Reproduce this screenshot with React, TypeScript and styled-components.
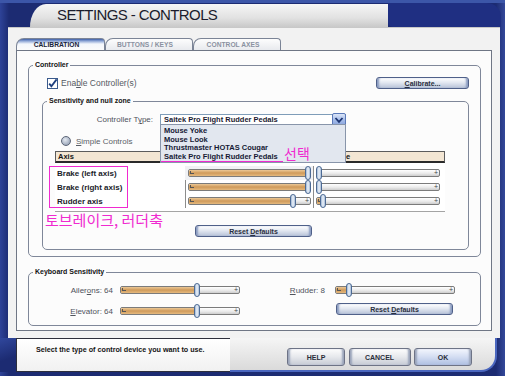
import React from "react";
import styled, { createGlobalStyle } from "styled-components";

const GlobalStyle = createGlobalStyle`
  html, body {
    margin: 0;
    padding: 0;
    background: #1c2b72;
  }
  body {
    font-family: "Liberation Sans", Arial, sans-serif;
  }
`;

const magenta = "#f02ad0";

interface SliderProps {
  value: number;
  width: number;
}

const Slider: React.FC<SliderProps> = ({ value, width }) => {
  const thumbW = 6;
  const left = Math.round(value * (width - thumbW));
  return (
    <StyledTrack $w={width}>
      <StyledFill style={{ width: left + thumbW / 2 }} />
      <StyledCapLeft />
      <StyledCapRight>+</StyledCapRight>
      <StyledThumb style={{ left: left - 1 }} />
    </StyledTrack>
  );
};

const CheckIcon = () => (
  <svg width="11" height="11" viewBox="0 0 11 11">
    <rect x="0.5" y="0.5" width="10" height="10" fill="#ffffff" stroke="#3a5a8c" />
    <path d="M2.2 5.6 L4.4 8.2 L9.6 1.4" fill="none" stroke="#1d3f7e" strokeWidth="1.8" />
  </svg>
);

const ChevronIcon = () => (
  <svg width="10" height="8" viewBox="0 0 10 8">
    <path d="M1.5 2 L5 5.8 L8.5 2" fill="none" stroke="#1c3572" strokeWidth="1.8" />
  </svg>
);

const rows = [
  { label: "Brake (left axis)", sens: 1, nul: 0, line: false, hl: true },
  { label: "Brake (right axis)", sens: 1, nul: 0, line: true, hl: false },
  { label: "Rudder axis", sens: 0.87, nul: 0.03, line: true, hl: false },
];

const App: React.FC = () => {
  return (
    <>
      <GlobalStyle />
      <StyledFrame>
        <StyledTitleBar>
          <StyledTitleTab>SETTINGS - CONTROLS</StyledTitleTab>
          <StyledTitleRight />
        </StyledTitleBar>

        <StyledPanel>
          <StyledTabRow>
            <StyledTab $w={89} $active>
              CALIBRATION
            </StyledTab>
            <StyledTab $w={88}>BUTTONS / KEYS</StyledTab>
            <StyledTab $w={88}>CONTROL AXES</StyledTab>
          </StyledTabRow>

          <StyledContent>
            <StyledGroup $h={197}>
              <StyledLegend>Controller</StyledLegend>
              <StyledControllerBody>
                <StyledEnableRow>
                  <StyledCheckLabel>
                    <CheckIcon />
                    <span>
                      Ena<u>b</u>le Controller(s)
                    </span>
                  </StyledCheckLabel>
                  <StyledButton $w={93}>
                    <span>
                      <u>C</u>alibrate...
                    </span>
                  </StyledButton>
                </StyledEnableRow>

                <StyledGroup $h={154} $mt={7}>
                  <StyledLegend>Sensitivity and null zone</StyledLegend>
                  <StyledTypeRow>
                    <StyledFieldLabel $w={110}>
                      Controller T<u>y</u>pe:
                    </StyledFieldLabel>
                    <StyledSelect>
                      <StyledSelectText>Saitek Pro Flight Rudder Pedals</StyledSelectText>
                      <StyledArrowButton>
                        <ChevronIcon />
                      </StyledArrowButton>
                      <StyledDropList>
                        <StyledDropItem>Mouse Yoke</StyledDropItem>
                        <StyledDropItem>Mouse Look</StyledDropItem>
                        <StyledDropItem>Thrustmaster HOTAS Cougar</StyledDropItem>
                        <StyledDropItem>
                          <StyledPicked>Saitek Pro Flight Rudder Pedals</StyledPicked>
                        </StyledDropItem>
                        <StyledNoteSmall>선택</StyledNoteSmall>
                      </StyledDropList>
                    </StyledSelect>
                  </StyledTypeRow>

                  <StyledRadioRow>
                    <StyledRadio />
                    <span>
                      <u>S</u>imple Controls
                    </span>
                  </StyledRadioRow>

                  <StyledTable>
                    <StyledHeader>
                      <StyledHeadCell>Axis</StyledHeadCell>
                      <StyledHeadCell />
                      <StyledHeadCell>Null Zone</StyledHeadCell>
                    </StyledHeader>
                    <StyledBody>
                      {rows.map((r) => (
                        <StyledRow key={r.label}>
                          <StyledAxisCell>{r.label}</StyledAxisCell>
                          <StyledSliderCell $line={r.line} $hl={r.hl}>
                            <Slider value={r.sens} width={123} />
                          </StyledSliderCell>
                          <StyledSliderCell $line>
                            <Slider value={r.nul} width={124} />
                          </StyledSliderCell>
                        </StyledRow>
                      ))}
                    </StyledBody>
                    <StyledMarkBox />
                    <StyledNoteBig>토브레이크, 러더축</StyledNoteBig>
                  </StyledTable>

                  <StyledButton $w={117} $ml={152} $mt={13}>
                    <span>
                      Reset <u>D</u>efaults
                    </span>
                  </StyledButton>
                </StyledGroup>
              </StyledControllerBody>
            </StyledGroup>

            <StyledGroup $h={59} $mt={10}>
              <StyledLegend>Keyboard Sensitivity</StyledLegend>
              <StyledKeyBody>
                <StyledKeyCol $w={211}>
                  <StyledKeyRow $mt={7}>
                    <StyledFieldLabel $w={84}>
                      Ailer<u>o</u>ns: 64
                    </StyledFieldLabel>
                    <StyledSliderSlot $ml={7}>
                      <Slider value={0.65} width={120} />
                    </StyledSliderSlot>
                  </StyledKeyRow>
                  <StyledKeyRow $mt={9}>
                    <StyledFieldLabel $w={84}>
                      <u>E</u>levator: 64
                    </StyledFieldLabel>
                    <StyledSliderSlot $ml={7}>
                      <Slider value={0.65} width={120} />
                    </StyledSliderSlot>
                  </StyledKeyRow>
                </StyledKeyCol>
                <StyledKeyCol $w={220}>
                  <StyledKeyRow $mt={7}>
                    <StyledFieldLabel $w={85}>
                      <u>R</u>udder: 8
                    </StyledFieldLabel>
                    <StyledSliderSlot $ml={10}>
                      <Slider value={0.1} width={120} />
                    </StyledSliderSlot>
                  </StyledKeyRow>
                  <StyledButton $w={117} $ml={96} $mt={7}>
                    <span>
                      Reset <u>D</u>efaults
                    </span>
                  </StyledButton>
                </StyledKeyCol>
              </StyledKeyBody>
            </StyledGroup>
          </StyledContent>
        </StyledPanel>

        <StyledFooter>
          <StyledFooterCorner />
          <StyledStatus>Select the type of control device you want to use.</StyledStatus>
          <StyledButtonArea>
            <StyledBigButton $w={58}>HELP</StyledBigButton>
            <StyledBigButton $w={62}>CANCEL</StyledBigButton>
            <StyledBigButton $w={58} $primary>
              OK
            </StyledBigButton>
          </StyledButtonArea>
        </StyledFooter>
      </StyledFrame>
    </>
  );
};

export default App;

const StyledFrame = styled.div`
  width: 505px;
  height: 376px;
  overflow: hidden;
  display: flex;
  flex-direction: column;
  background: linear-gradient(90deg, #2e4398 0, #1c2b72 9px, #1c2b72 496px, #34489a 505px);
`;

const StyledTitleBar = styled.div`
  display: flex;
  height: 27px;
  padding-left: 30px;
  border-top: 3px solid #3c56a8;
  box-sizing: border-box;
`;

const StyledTitleTab = styled.div`
  width: 358px;
  margin-top: 1px;
  padding-left: 27px;
  box-sizing: border-box;
  background: linear-gradient(#f6f6f6, #e2e2e2 60%, #c9c9c9);
  border-top-left-radius: 16px 23px;
  font-size: 15px;
  letter-spacing: -0.6px;
  line-height: 22px;
  color: #1b1c2c;
`;

const StyledTitleRight = styled.div`
  flex: 1;
  margin-right: 4px;
  background: #1f2f82;
  border-top-right-radius: 14px;
  border-bottom-left-radius: 5px;
`;

const StyledPanel = styled.div`
  height: 311px;
  margin: 0 5px 0 8px;
  padding: 10px 0 0 8px;
  box-sizing: border-box;
  background: #f2f2f2;
  border-top: 1px solid #c8c8c8;
`;

const StyledTabRow = styled.div`
  display: flex;
  height: 12px;
`;

const StyledTab = styled.div<{ $w: number; $active?: boolean }>`
  width: ${({ $w }) => $w}px;
  height: 12px;
  box-sizing: border-box;
  display: flex;
  align-items: center;
  justify-content: center;
  padding-right: 8px;
  border: 1px solid #7b8496;
  border-bottom: none;
  border-radius: 8px 4px 0 0;
  font-size: 6.7px;
  font-weight: bold;
  color: ${({ $active }) => ($active ? "#1a2438" : "#8a91a0")};
  background: ${({ $active }) =>
    $active
      ? "linear-gradient(#3d5ea6 0, #8ea6d6 2px, #f4f7fc 5px, #fbfbfb)"
      : "linear-gradient(#fdfdfd, #e8eaee)"};
`;

const StyledContent = styled.div`
  width: 476px;
  height: 281px;
  box-sizing: border-box;
  border: 1px solid #6f7685;
  background: #fcfcfc;
  padding: 9px 10px 0 11px;
`;

const StyledGroup = styled.fieldset<{ $h: number; $mt?: number }>`
  margin: ${({ $mt }) => $mt ?? 0}px 0 0;
  padding: 0;
  min-width: 0;
  height: ${({ $h }) => $h}px;
  box-sizing: border-box;
  border: 1px solid #7f8799;
  border-radius: 5px;
`;

const StyledLegend = styled.legend`
  margin-left: 4px;
  padding: 0 2px;
  font-size: 7px;
  font-weight: bold;
  line-height: 10px;
  color: #121212;
`;

const StyledControllerBody = styled.div`
  padding: 0 11px 0 13px;
`;

const StyledEnableRow = styled.div`
  display: flex;
  align-items: center;
  justify-content: space-between;
  height: 12px;
  margin-top: 7px;
  padding-left: 5px;
`;

const StyledCheckLabel = styled.div`
  display: flex;
  align-items: center;
  gap: 3px;
  font-size: 8.5px;
  color: #555a63;
`;

const StyledButton = styled.div<{ $w: number; $ml?: number; $mt?: number }>`
  width: ${({ $w }) => $w}px;
  height: 12px;
  margin: ${({ $mt }) => $mt ?? 0}px 0 0 ${({ $ml }) => $ml ?? 0}px;
  box-sizing: border-box;
  display: flex;
  align-items: center;
  justify-content: center;
  border: 1px solid #4f6089;
  border-radius: 3px;
  background: linear-gradient(#ffffff, #e3e8f1 45%, #b7c2d8);
  box-shadow: inset 3px 0 2px -1px #8a9bc0, inset -3px 0 2px -1px #8a9bc0;
  font-size: 7px;
  font-weight: bold;
  color: #2a2f3e;
  white-space: pre;
`;

const StyledTypeRow = styled.div`
  display: flex;
  align-items: center;
  height: 11px;
  margin-top: 8px;
`;

const StyledFieldLabel = styled.div<{ $w: number }>`
  width: ${({ $w }) => $w}px;
  flex-shrink: 0;
  text-align: right;
  font-size: 8px;
  color: #4f535c;
  white-space: nowrap;
`;

const StyledSelect = styled.div`
  position: relative;
  display: flex;
  align-items: center;
  width: 186px;
  height: 11px;
  margin-left: 7px;
  box-sizing: border-box;
  border: 1px solid #7f9db9;
  background: #ffffff;
`;

const StyledSelectText = styled.div`
  flex: 1;
  padding-left: 3px;
  font-size: 7.5px;
  font-weight: bold;
  color: #1b1b33;
`;

const StyledArrowButton = styled.div`
  width: 14px;
  height: 13px;
  margin: -1px -1px -1px 0;
  box-sizing: border-box;
  display: flex;
  align-items: center;
  justify-content: center;
  border: 1px solid #5b79b8;
  border-radius: 2px;
  background: linear-gradient(#dbe5f8, #a9bfea 50%, #8aa5dd);
`;

const StyledDropList = styled.div`
  position: absolute;
  top: 100%;
  left: -1px;
  width: 186px;
  height: 39px;
  box-sizing: border-box;
  padding-top: 2px;
  border: 1px solid #8895aa;
  background: #e2e7ef;
  z-index: 2;
`;

const StyledDropItem = styled.div`
  height: 8.7px;
  line-height: 8.7px;
  padding-left: 3px;
  font-size: 7.5px;
  font-weight: bold;
  color: #161a35;
  white-space: nowrap;
`;

const StyledPicked = styled.span`
  display: inline-block;
  margin-left: -3px;
  padding: 0 5px 0 3px;
  line-height: 8px;
  border-bottom: 1px solid ${magenta};
`;

const StyledNoteSmall = styled.div`
  position: absolute;
  left: 123px;
  top: 21px;
  font-family: "Noto Sans CJK KR", sans-serif;
  font-size: 14px;
  line-height: 14px;
  color: ${magenta};
`;

const StyledRadioRow = styled.div`
  display: flex;
  align-items: center;
  gap: 5px;
  height: 12px;
  margin-top: 10px;
  padding-left: 18px;
  font-size: 8px;
  color: #5a5e66;
`;

const StyledRadio = styled.div`
  width: 10px;
  height: 10px;
  box-sizing: border-box;
  border-radius: 50%;
  border: 1px solid #5d6678;
  background: radial-gradient(circle at 40% 35%, #e4e9f1, #a2adbf 70%, #7c889d);
`;

const StyledTable = styled.div`
  position: relative;
  width: 390px;
  margin: 4px 0 0 12px;
`;

const columns = "130px 128px 1fr";

const StyledHeader = styled.div`
  display: grid;
  grid-template-columns: ${columns};
  height: 12px;
  box-sizing: border-box;
  border: 1px solid #5c5c5c;
  border-bottom: 2px solid #2a2a2a;
  background: #f3e6d3;
`;

const StyledHeadCell = styled.div`
  padding-left: 2px;
  font-size: 7.5px;
  font-weight: bold;
  line-height: 9px;
  color: #161616;
`;

const StyledBody = styled.div`
  padding: 3px 0;
  border-bottom: 1px solid #a4a4a4;
  background: #ffffff;
`;

const StyledRow = styled.div`
  display: grid;
  grid-template-columns: ${columns};
  height: 14px;
`;

const StyledAxisCell = styled.div`
  display: flex;
  align-items: center;
  padding-left: 2px;
  font-size: 8px;
  font-weight: bold;
  color: #1a1c2a;
`;

const StyledSliderCell = styled.div<{ $line?: boolean; $hl?: boolean }>`
  display: flex;
  align-items: center;
  padding-left: 2px;
  border-left: 1px solid ${({ $line }) => ($line ? "#8c8c8c" : "transparent")};
  background: ${({ $hl }) => ($hl ? "#f0f1f4" : "transparent")};
`;

const StyledMarkBox = styled.div`
  position: absolute;
  left: -6px;
  top: 15px;
  width: 79px;
  height: 42px;
  box-sizing: border-box;
  border: 1px solid ${magenta};
`;

const StyledNoteBig = styled.div`
  position: absolute;
  left: -10px;
  top: 61px;
  font-family: "Noto Sans CJK KR", sans-serif;
  font-size: 15px;
  line-height: 16px;
  white-space: nowrap;
  color: ${magenta};
`;

const StyledTrack = styled.div<{ $w: number }>`
  position: relative;
  width: ${({ $w }) => $w}px;
  height: 8px;
  box-sizing: border-box;
  border: 1px solid #7b7b7b;
  border-radius: 2px;
  background: linear-gradient(#ffffff, #ebebeb 55%, #cdcdcd);
`;

const StyledFill = styled.div`
  position: absolute;
  left: 0;
  top: 0;
  bottom: 0;
  border-radius: 1px;
  background: linear-gradient(#ecc896, #cf9a5a 50%, #e5b97e);
`;

const StyledCapLeft = styled.div`
  position: absolute;
  left: 1px;
  top: 1px;
  width: 3px;
  height: 2px;
  border-left: 1px solid #555;
  border-bottom: 1px solid #555;
`;

const StyledCapRight = styled.div`
  position: absolute;
  right: 1px;
  top: -2px;
  font-size: 7px;
  line-height: 9px;
  color: #444;
`;

const StyledThumb = styled.div`
  position: absolute;
  top: -4px;
  width: 6px;
  height: 14px;
  box-sizing: border-box;
  border: 1px solid #4d6b95;
  border-radius: 3px;
  background: linear-gradient(90deg, #9fb6d3, #eef4fb 50%, #a8bcd6);
`;

const StyledKeyBody = styled.div`
  display: flex;
`;

const StyledKeyCol = styled.div<{ $w: number }>`
  width: ${({ $w }) => $w}px;
  display: flex;
  flex-direction: column;
`;

const StyledKeyRow = styled.div<{ $mt: number }>`
  display: flex;
  align-items: center;
  height: 12px;
  margin-top: ${({ $mt }) => $mt}px;
`;

const StyledSliderSlot = styled.div<{ $ml: number }>`
  margin-left: ${({ $ml }) => $ml}px;
`;

const StyledFooter = styled.div`
  display: flex;
  height: 38px;
`;

const StyledFooterCorner = styled.div`
  width: 16px;
  height: 34px;
  background: linear-gradient(160deg, #30479c, #1c2b72 60%);
`;

const StyledStatus = styled.div`
  width: 214px;
  height: 34px;
  box-sizing: border-box;
  padding: 6px 0 0 19px;
  border: 1px solid #2d2f3c;
  border-right: none;
  background: linear-gradient(#ffffff, #f1f1f1);
  font-size: 7.2px;
  font-weight: bold;
  line-height: 9px;
  color: #141414;
`;

const StyledButtonArea = styled.div`
  flex: 1;
  height: 34px;
  margin-right: 8px;
  box-sizing: border-box;
  display: flex;
  gap: 3.5px;
  padding: 10px 0 0 57px;
  background: linear-gradient(#f5f5f5, #dadada);
  border-right: 2px solid #4a66be;
  border-bottom: 2px solid #4a66be;
  border-bottom-right-radius: 16px;
`;

const StyledBigButton = styled.div<{ $w: number; $primary?: boolean }>`
  width: ${({ $w }) => $w}px;
  height: 18px;
  box-sizing: border-box;
  display: flex;
  align-items: center;
  justify-content: center;
  border: 1px solid #6d7386;
  border-radius: 3px;
  background: ${({ $primary }) =>
    $primary
      ? "linear-gradient(#f3f6fd, #d3ddf2 50%, #aebfe2)"
      : "linear-gradient(#fdfdfd, #e6e8ec 50%, #c6cbd5)"};
  box-shadow: inset 3px 0 2px -1px #9aa4ba, inset -3px 0 2px -1px #9aa4ba;
  font-size: 7px;
  font-weight: bold;
  color: #2a2d3a;
`;
